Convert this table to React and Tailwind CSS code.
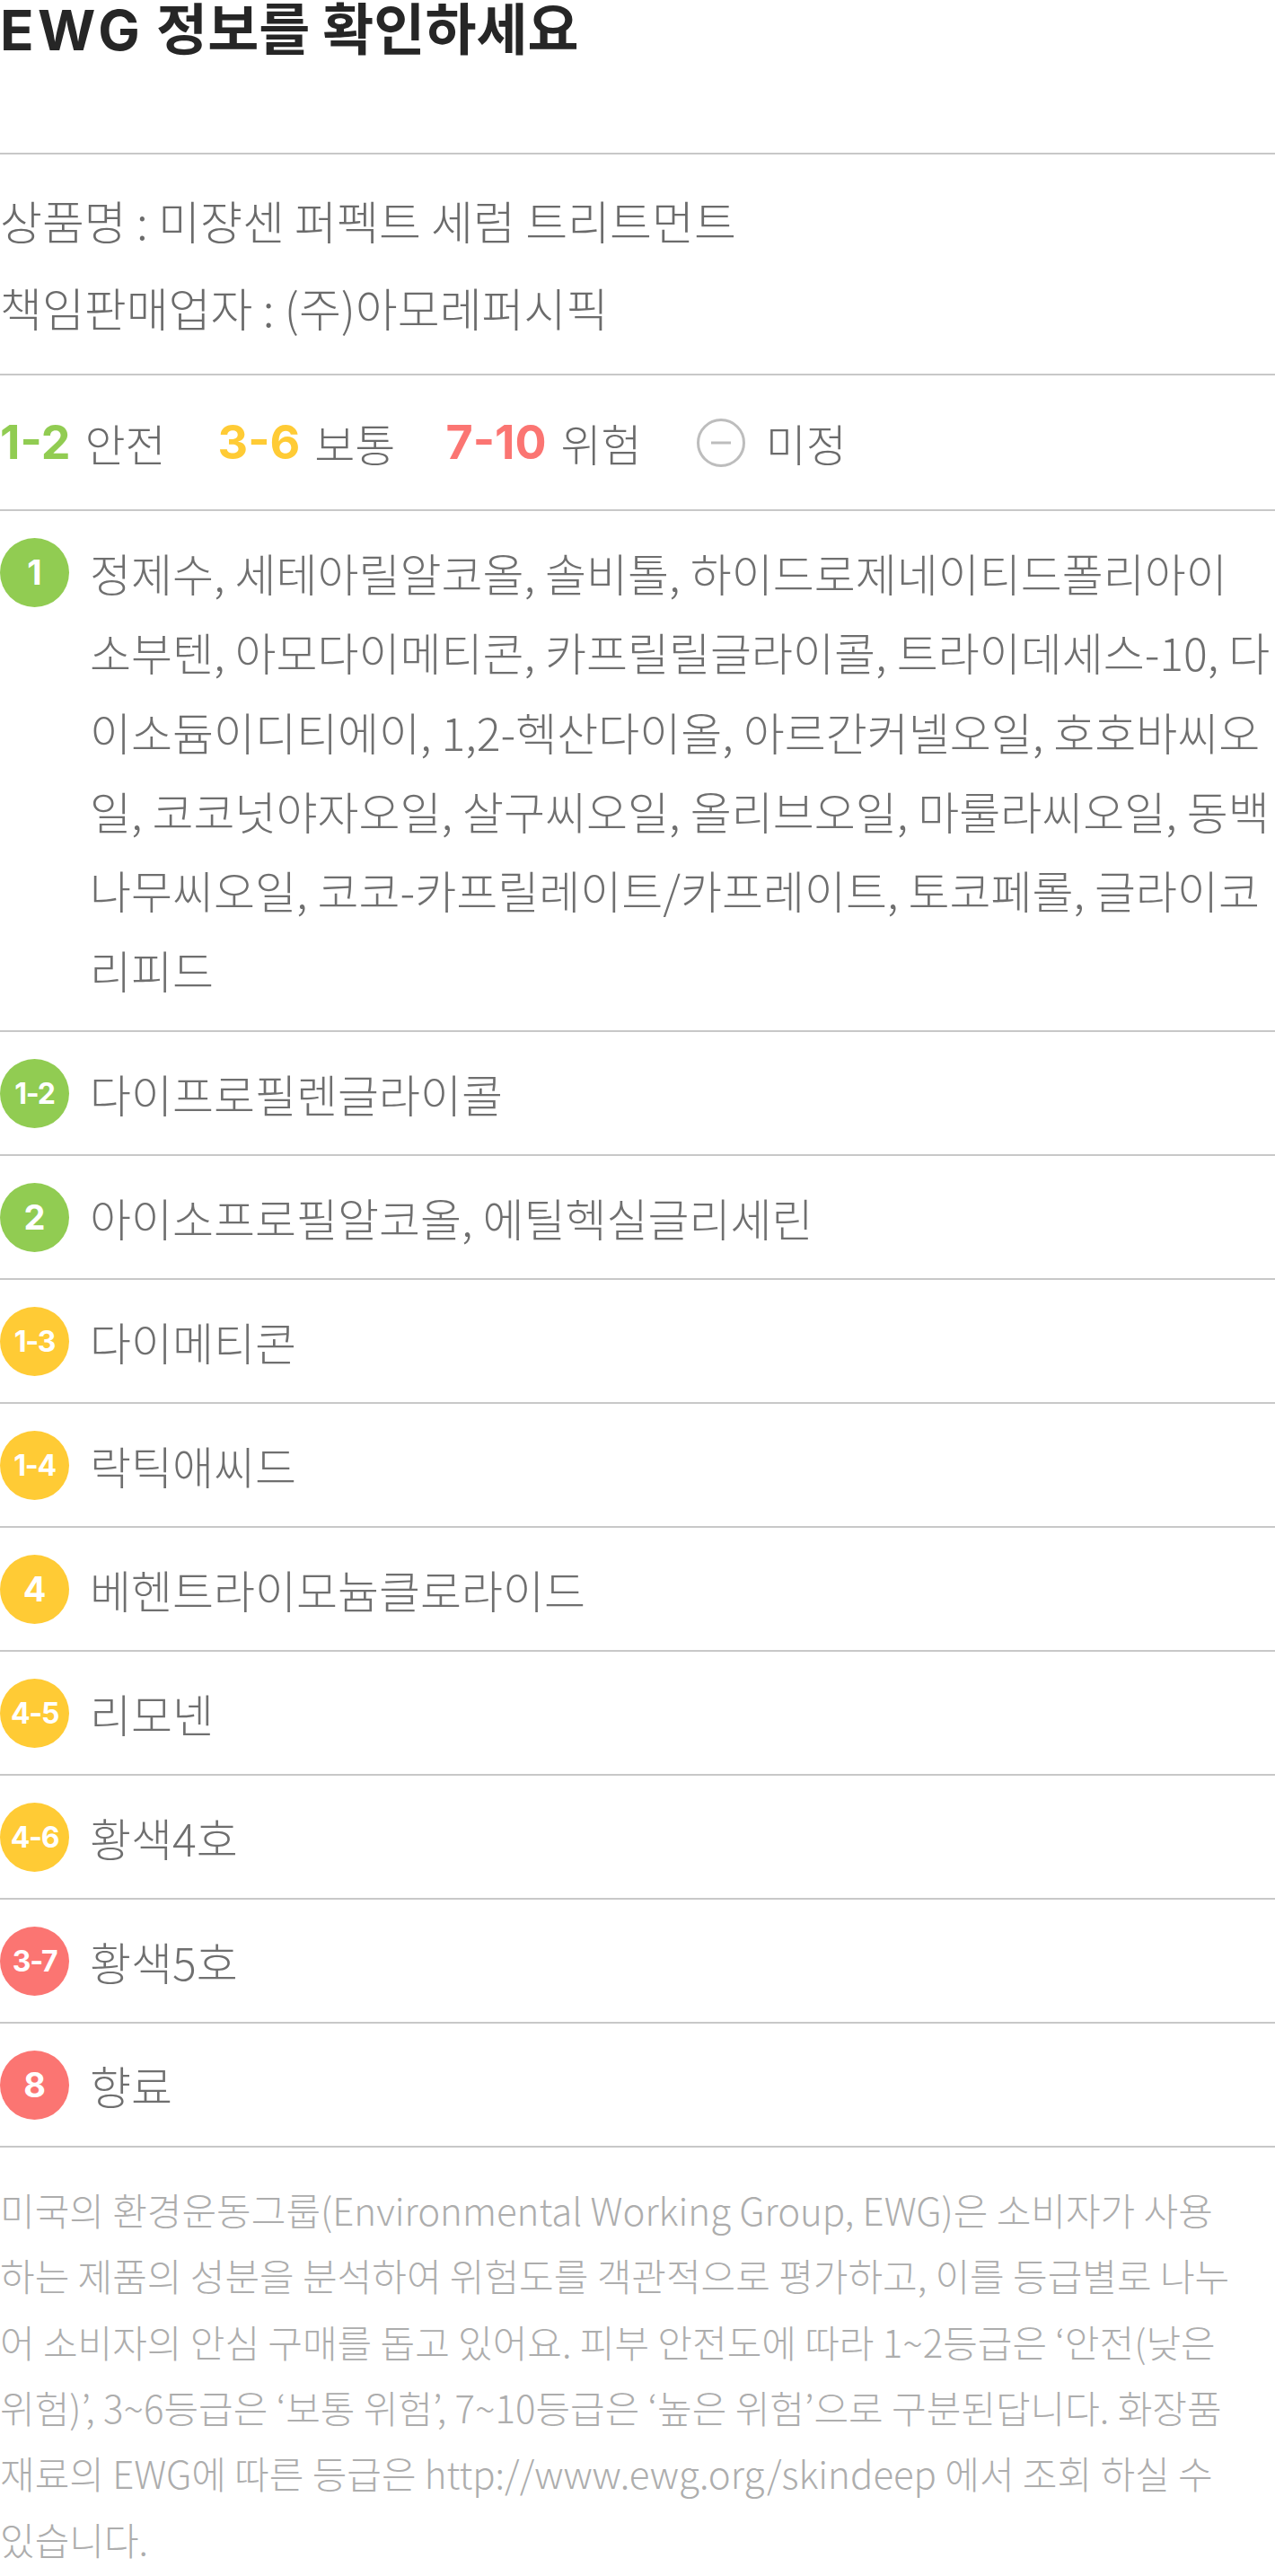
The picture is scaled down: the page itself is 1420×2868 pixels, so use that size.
import React from "react";

const GREEN = "bg-[#91cc52]";
const YELLOW = "bg-[#ffcb35]";
const RED = "bg-[#fb7572]";

const rows = [
  {
    g: "1",
    c: GREEN,
    lines: [
      "정제수, 세테아릴알코올, 솔비톨, 하이드로제네이티드폴리아이",
      "소부텐, 아모다이메티콘, 카프릴릴글라이콜, 트라이데세스-10, 다",
      "이소듐이디티에이, 1,2-헥산다이올, 아르간커넬오일, 호호바씨오",
      "일, 코코넛야자오일, 살구씨오일, 올리브오일, 마룰라씨오일, 동백",
      "나무씨오일, 코코-카프릴레이트/카프레이트, 토코페롤, 글라이코",
      "리피드",
    ],
  },
  { g: "1-2", c: GREEN, lines: ["다이프로필렌글라이콜"] },
  { g: "2", c: GREEN, lines: ["아이소프로필알코올, 에틸헥실글리세린"] },
  { g: "1-3", c: YELLOW, lines: ["다이메티콘"] },
  { g: "1-4", c: YELLOW, lines: ["락틱애씨드"] },
  { g: "4", c: YELLOW, lines: ["베헨트라이모늄클로라이드"] },
  { g: "4-5", c: YELLOW, lines: ["리모넨"] },
  { g: "4-6", c: YELLOW, lines: ["황색4호"] },
  { g: "3-7", c: RED, lines: ["황색5호"] },
  { g: "8", c: RED, lines: ["향료"] },
];

const footerLines = [
  "미국의 환경운동그룹(Environmental Working Group, EWG)은 소비자가 사용",
  "하는 제품의 성분을 분석하여 위험도를 객관적으로 평가하고, 이를 등급별로 나누",
  "어 소비자의 안심 구매를 돕고 있어요. 피부 안전도에 따라 1~2등급은 ‘안전(낮은",
  "위험)’, 3~6등급은 ‘보통 위험’, 7~10등급은 ‘높은 위험’으로 구분된답니다. 화장품",
  "재료의 EWG에 따른 등급은 http://www.ewg.org/skindeep 에서 조회 하실 수",
  "있습니다.",
];

function Badge({ g, c }) {
  const single = g.length === 1;
  return (
    <div
      className={`${c} mt-[6px] flex h-[77px] w-[77px] shrink-0 items-center justify-center rounded-full font-['Inter',sans-serif] font-bold text-white ${
        single ? "text-[38px]" : "text-[32px] tracking-[-0.04em]"
      }`}
    >
      {g}
    </div>
  );
}

export default function App() {
  return (
    <div className="w-[1420px] bg-white font-['Noto_Sans_CJK_KR','Noto_Sans',sans-serif]">
      <h1 className="h-[170px] text-[62px] font-bold leading-[58px] text-[#262626]">
        <span className="font-['Inter','Noto_Sans_CJK_KR',sans-serif] tracking-[0.07em]">EWG</span> 정보를 확인하세요
      </h1>

      <div className="border-t-2 border-[#c8c8c8] pt-[25px] pb-[25px] text-[51px] font-light leading-[97px] text-[#6b6b6b]">
        <p>상품명 : 미쟝센 퍼펙트 세럼 트리트먼트</p>
        <p>책임판매업자 : (주)아모레퍼시픽</p>
      </div>

      <div className="flex h-[151px] items-center border-t-2 border-[#c8c8c8] text-[49px] font-light text-[#6b6b6b]">
        <div className="flex items-center gap-[16px]">
          <span className="font-['Inter',sans-serif] text-[52px] font-bold text-[#91cc52]">1-2</span>
          <span>안전</span>
        </div>
        <div className="ml-[58px] flex items-center gap-[16px]">
          <span className="font-['Inter',sans-serif] text-[52px] font-bold text-[#ffcb35]">3-6</span>
          <span>보통</span>
        </div>
        <div className="ml-[56px] flex items-center gap-[16px]">
          <span className="font-['Inter',sans-serif] text-[52px] font-bold text-[#fb7572]">7-10</span>
          <span>위험</span>
        </div>
        <div className="ml-[60px] flex items-center gap-[22px]">
          <svg width="56" height="56" viewBox="0 0 56 56" className="block">
            <circle cx="28" cy="28" r="25.5" fill="none" stroke="#bdbdbd" strokeWidth="3" />
            <line x1="17" y1="28" x2="39" y2="28" stroke="#bdbdbd" strokeWidth="3" />
          </svg>
          <span>미정</span>
        </div>
      </div>

      {rows.map((r, i) => (
        <div
          key={i}
          className="flex items-start gap-[23px] border-t-2 border-[#c8c8c8] py-[24px]"
        >
          <Badge g={r.g} c={r.c} />
          <p
            className={`text-[50px] font-light text-[#6f6f6f] ${
              i === 0 ? "leading-[88.35px]" : "leading-[88px]"
            }`}
          >
            {r.lines.map((l, j) => (
              <span key={j} className="block whitespace-nowrap">
                {l}
              </span>
            ))}
          </p>
        </div>
      ))}

      <div className="border-t-2 border-[#c8c8c8] pt-[32px] pb-[5px] text-[42px] font-light leading-[73.3px] text-[#adadad]">
        <p>
          {footerLines.map((l, j) => (
            <span key={j} className="block whitespace-nowrap">
              {l}
            </span>
          ))}
        </p>
      </div>
    </div>
  );
}
